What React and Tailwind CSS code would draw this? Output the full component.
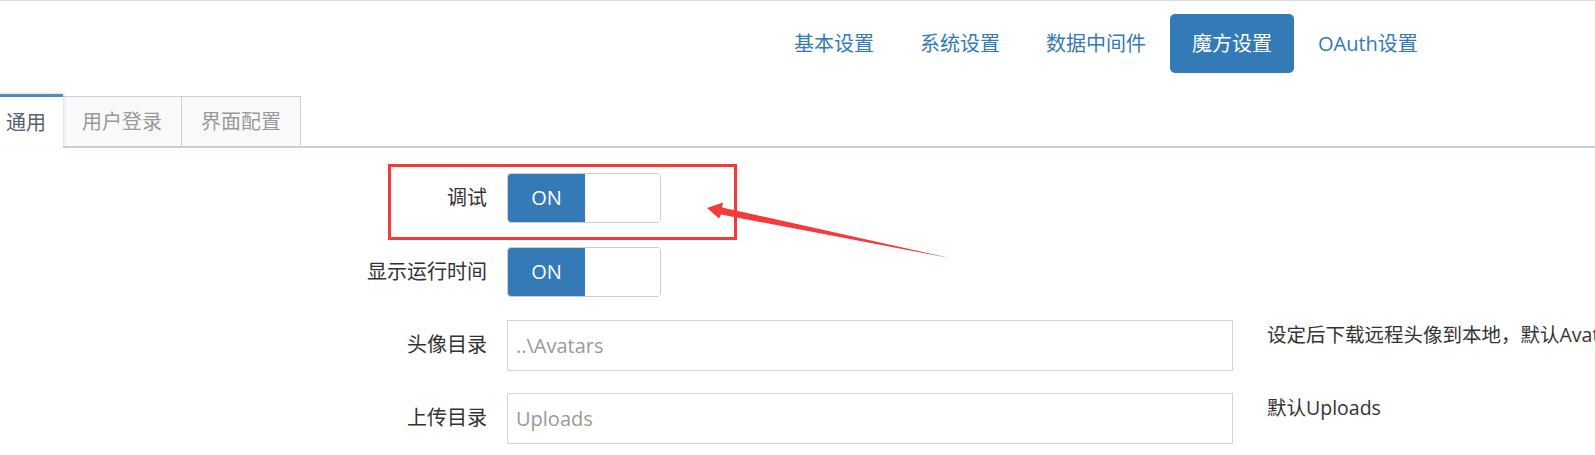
import React from 'react';

const FONT = { fontFamily: '"Open Sans", "Noto Sans CJK SC", sans-serif' };

const navItems = ['基本设置', '系统设置', '数据中间件', '魔方设置', 'OAuth设置'];
const tabs = ['通用', '用户登录', '界面配置'];

function Toggle() {
    return (
        <div className="flex w-[154px] h-[50px] rounded-[4px] border border-[#ccc] overflow-hidden">
            <div className="w-[77px] h-full bg-[#337ab7] text-white text-[20px] flex items-center justify-center">
                ON
            </div>
            <div className="flex-1 bg-white" />
        </div>
    );
}

function Row({ label, children, help, className }) {
    return (
        <div className={`flex items-start ${className}`}>
            <div className="w-[487px] shrink-0 h-[50px] flex items-center justify-end text-[20px] text-[#333]">
                {label}
            </div>
            <div className="ml-[20px] shrink-0">{children}</div>
            {help && (
                <div className="ml-[34px] pt-[1px] text-[19.5px] leading-[28px] text-[#333] whitespace-nowrap">
                    {help}
                </div>
            )}
        </div>
    );
}

function TextBox({ placeholder }) {
    return (
        <input
            readOnly
            placeholder={placeholder}
            className="w-[726px] h-[51px] border border-[#d5d5d5] px-[8px] text-[20px] text-[#333] placeholder:text-[#999] outline-none bg-white"
            style={FONT}
        />
    );
}

export default function App() {
    return (
        <div className="relative w-[1595px] h-[455px] overflow-hidden bg-white border-t border-[#dedede]" style={FONT}>
            {/* top nav pills */}
            <div className="flex gap-[2px] pl-[772px] pt-[13px]">
                {navItems.map((item) => (
                    <div
                        key={item}
                        className={`h-[59px] px-[22px] flex items-center text-[20px] rounded-[5px] ${item === '魔方设置' ? 'bg-[#337ab7] text-white' : 'text-[#337ab7]'}`}
                    >
                        {item}
                    </div>
                ))}
            </div>

            {/* tabs */}
            <div className="mt-[21px] flex items-end h-[54px] border-b-2 border-[#c5d0dc] -ml-[11px]">
                {tabs.map((tab, i) =>
                    i === 0 ? (
                        <div
                            key={tab}
                            className="h-[54px] -mb-[2px] px-[17px] flex items-center bg-white border-t-[3px] border-[#4c8fbd] text-[20px] text-[#576373] shadow-[1px_-1px_3px_rgba(0,0,0,0.12)] z-10"
                        >
                            {tab}
                        </div>
                    ) : (
                        <div
                            key={tab}
                            className="h-[50px] px-[19px] flex items-center bg-[#f9f9f9] border-t border-r border-[#c5d0dc] text-[20px] text-[#999]"
                        >
                            {tab}
                        </div>
                    )
                )}
            </div>

            {/* form */}
            <Row label="调试" className="mt-[25px]">
                <Toggle />
            </Row>
            <Row label="显示运行时间" className="mt-[24px]">
                <Toggle />
            </Row>
            <Row label="头像目录" className="mt-[23px]" help="设定后下载远程头像到本地，默认Avatars">
                <TextBox placeholder="..\Avatars" />
            </Row>
            <Row label="上传目录" className="mt-[22px]" help="默认Uploads">
                <TextBox placeholder="Uploads" />
            </Row>

            {/* annotation */}
            <div className="absolute left-[388px] top-[163px] w-[349px] h-[76px] border-[3px] border-[#f43a3a] pointer-events-none" />
            <svg className="absolute inset-0 pointer-events-none" width="1595" height="455" viewBox="0 0 1595 455">
                <polygon
                    points="707,207 723,201.5 722,206.5 952,257.5 721,213.5 719,217.5"
                    fill="#f43a3a"
                />
            </svg>
        </div>
    );
}
